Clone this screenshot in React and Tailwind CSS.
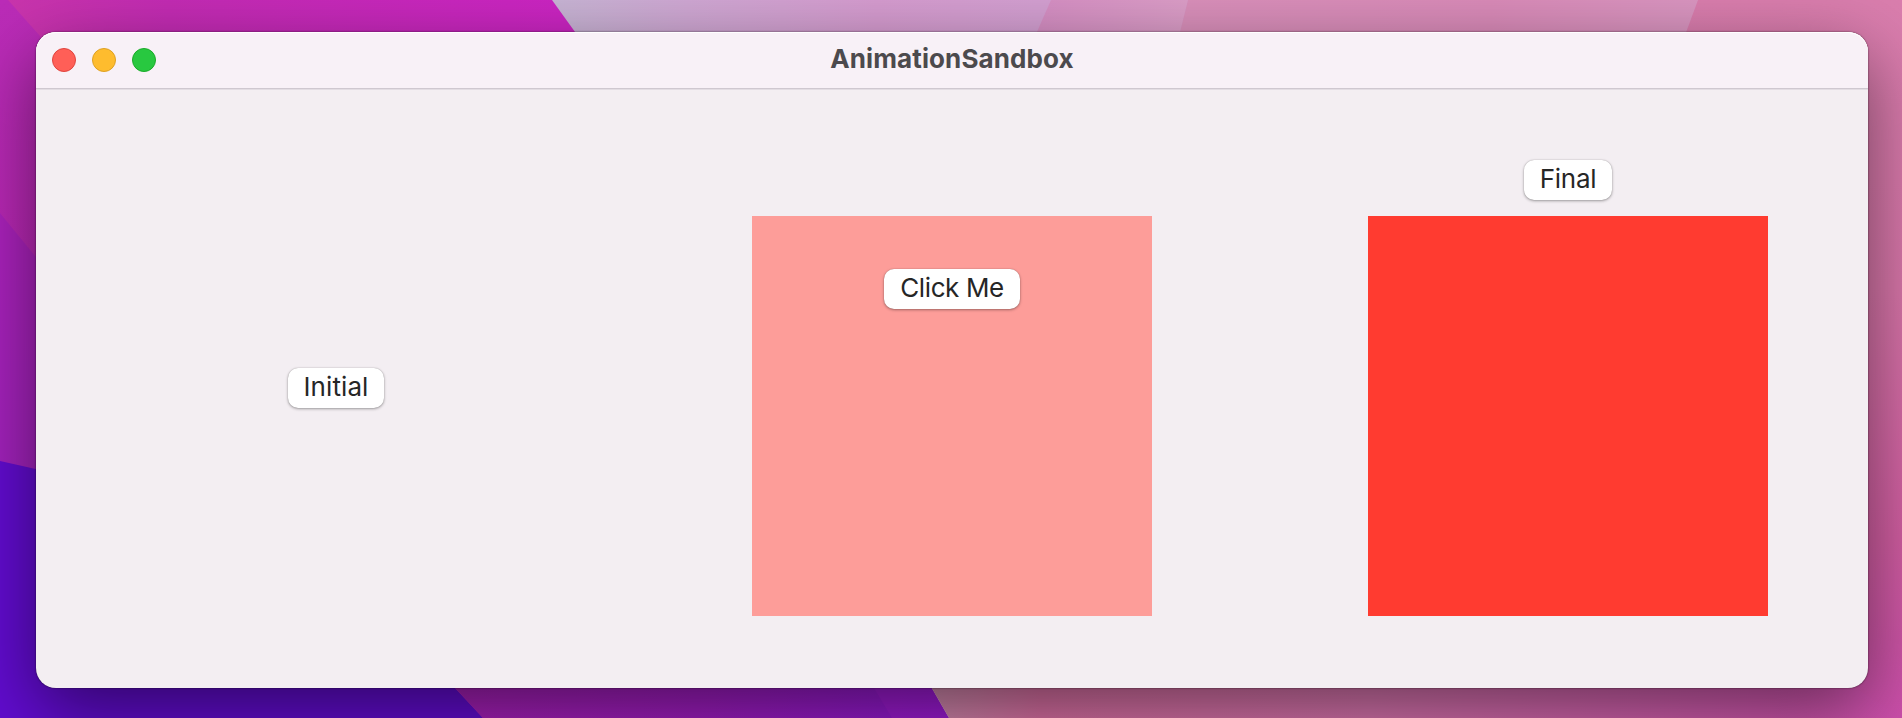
import React from "react";

const Wallpaper = () => {
  return (
    <svg className="absolute inset-0 h-full w-full" viewBox="0 0 1902 718" preserveAspectRatio="none" aria-hidden="true">
      <defs>
        <linearGradient id="magenta" gradientUnits="userSpaceOnUse" x1="0" y1="0" x2="560" y2="0">
          <stop offset="0" stopColor="#c935ac" />
          <stop offset="0.3" stopColor="#c42cb4" />
          <stop offset="1" stopColor="#cc25c3" />
        </linearGradient>
        <linearGradient id="orchid" gradientUnits="userSpaceOnUse" x1="0" y1="0" x2="0" y2="260">
          <stop offset="0" stopColor="#bb2cb8" />
          <stop offset="1" stopColor="#b827b4" />
        </linearGradient>
        <linearGradient id="violet" gradientUnits="userSpaceOnUse" x1="0" y1="210" x2="0" y2="470">
          <stop offset="0" stopColor="#ac22bc" />
          <stop offset="1" stopColor="#a222bc" />
        </linearGradient>
        <linearGradient id="lilac" gradientUnits="userSpaceOnUse" x1="552" y1="0" x2="1902" y2="0">
          <stop offset="0" stopColor="#c8b5d5" />
          <stop offset="0.1" stopColor="#d0a8d4" />
          <stop offset="0.24" stopColor="#d69cd0" />
          <stop offset="0.36" stopColor="#d4a0d2" />
          <stop offset="1" stopColor="#db94c0" />
        </linearGradient>
        <linearGradient id="blossom" gradientUnits="userSpaceOnUse" x1="1040" y1="0" x2="1188" y2="0">
          <stop offset="0" stopColor="#d68fc4" />
          <stop offset="1" stopColor="#dc9ec8" />
        </linearGradient>
        <linearGradient id="blush" gradientUnits="userSpaceOnUse" x1="1180" y1="0" x2="1700" y2="0">
          <stop offset="0" stopColor="#da90bb" />
          <stop offset="0.6" stopColor="#da8bb9" />
          <stop offset="1" stopColor="#da96c1" />
        </linearGradient>
        <linearGradient id="rose" gradientUnits="userSpaceOnUse" x1="1850" y1="0" x2="1850" y2="718">
          <stop offset="0" stopColor="#da7eae" />
          <stop offset="0.4" stopColor="#d876a9" />
          <stop offset="0.75" stopColor="#d25ea2" />
          <stop offset="1" stopColor="#cd4fac" />
        </linearGradient>
        <linearGradient id="plum" gradientUnits="userSpaceOnUse" x1="445" y1="0" x2="948" y2="0">
          <stop offset="0" stopColor="#a820b8" />
          <stop offset="0.5" stopColor="#9f1cc0" />
          <stop offset="1" stopColor="#9018d2" />
        </linearGradient>
        <linearGradient id="mauve" gradientUnits="userSpaceOnUse" x1="934" y1="0" x2="1902" y2="0">
          <stop offset="0" stopColor="#d088ac" />
          <stop offset="0.11" stopColor="#da70a4" />
          <stop offset="0.45" stopColor="#d874ae" />
          <stop offset="0.85" stopColor="#d058ae" />
          <stop offset="1" stopColor="#cd4fac" />
        </linearGradient>
      </defs>
      <path d="M0 0H700V718H0z" fill="url(#magenta)" />
      <path d="M0 0H8L40 36L80 300H0z" fill="url(#orchid)" />
      <path d="M0 213L80 311V500H0z" fill="url(#violet)" />
      <path d="M0 461L80 479L455 688L483 718H0z" fill="#620cd0" />
      <path d="M552 0H1902V300H768z" fill="url(#lilac)" />
      <path d="M1051 0H1188L1163 100H1007z" fill="url(#blossom)" />
      <path d="M1188 0H1698L1661 100H1163z" fill="url(#blush)" />
      <path d="M1698 0H1902V718H1800L1661 100z" fill="url(#rose)" />
      <path d="M446 678L483 718H949L926 678z" fill="url(#plum)" />
      <path d="M868 678L892 718H949L926 678z" fill="#a41cd4" fillOpacity="0.6" />
      <path d="M926 678L949 718H1902L1840 678z" fill="url(#mauve)" />
    </svg>
  );
};

const Button = ({ children, className = "" }) => {
  return (
    <button
      className={`flex h-10 shrink-0 justify-center rounded-[10px] bg-white text-[26px] leading-[37px] text-[#262626] shadow-[0_0_1px_rgba(0,0,0,0.3),0_1px_3px_rgba(0,0,0,0.35)] ${className}`}
    >
      {children}
    </button>
  );
};

const App = () => {
  return (
    <div className="relative h-screen w-full overflow-hidden pt-8 pr-[34px] pb-[30px] pl-9 font-['Inter',sans-serif]">
      <Wallpaper />
      <main className="relative flex h-full w-full flex-col rounded-[20px] bg-[#f3eef2] shadow-[0_0_2px_rgba(0,0,0,0.7),0_24px_72px_rgba(0,0,0,0.5)]">
        <header className="grid h-[57px] shrink-0 grid-cols-3 items-start rounded-t-[20px] border-b border-[#cfc8d0] bg-[#f8f1f7] px-4 shadow-[inset_0_1px_0_#ffffff,0_1px_0_#e3dde3]">
          <div className="mt-4 flex gap-4">
            <span className="size-6 rounded-full border border-[#e0443e] bg-[#ff5f57]" />
            <span className="size-6 rounded-full border border-[#dea123] bg-[#febc2e]" />
            <span className="size-6 rounded-full border border-[#1aab29] bg-[#28c840]" />
          </div>
          <h1 className="text-center text-[26px] leading-[54px] font-bold tracking-[0.1px] whitespace-nowrap text-[#4c4a4d]">
            AnimationSandbox
          </h1>
        </header>
        <section className="-mt-px flex flex-1 items-center justify-between px-[100px]">
          <div className="flex w-[400px] justify-center">
            <Button className="w-24 tracking-[0.1px]">Initial</Button>
          </div>
          <div className="mt-14 flex size-[400px] justify-center bg-[#fd9d99] pt-[53px]">
            <Button className="w-[136px] tracking-[-0.4px]">Click Me</Button>
          </div>
          <div className="flex w-[400px] flex-col items-center gap-4">
            <Button className="w-[88px] tracking-[-0.3px]">Final</Button>
            <div className="size-[400px] bg-[#ff3b30]" />
          </div>
        </section>
      </main>
    </div>
  );
};

export default App;
